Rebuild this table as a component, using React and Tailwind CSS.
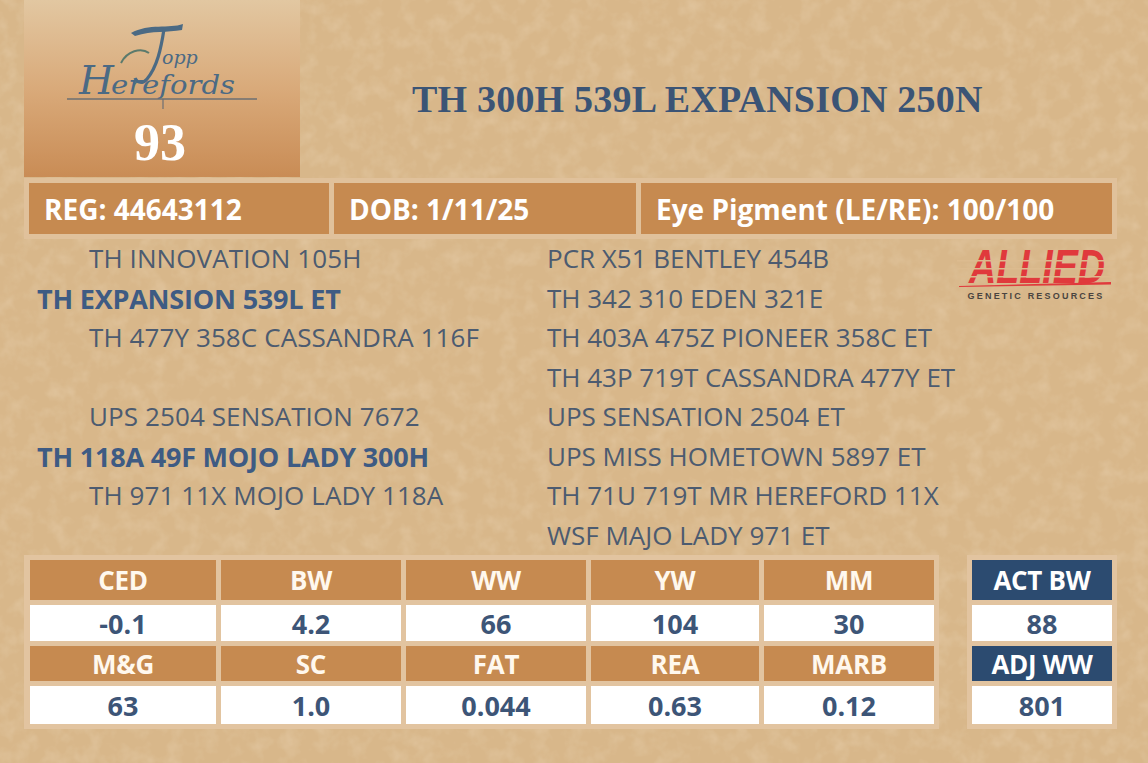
import React from 'react'

const SANS = { fontFamily: '"Open Sans", "Liberation Sans", sans-serif' }

const leftPedigree = [
  { text: 'TH INNOVATION 105H', indent: true },
  { text: 'TH EXPANSION 539L ET', bold: true },
  { text: 'TH 477Y 358C CASSANDRA 116F', indent: true },
  { text: '' },
  { text: 'UPS 2504 SENSATION 7672', indent: true },
  { text: 'TH 118A 49F MOJO LADY 300H', bold: true },
  { text: 'TH 971 11X MOJO LADY 118A', indent: true },
  { text: '' },
]

const rightPedigree = [
  'PCR X51 BENTLEY 454B',
  'TH 342 310 EDEN 321E',
  'TH 403A 475Z PIONEER 358C ET',
  'TH 43P 719T CASSANDRA 477Y ET',
  'UPS SENSATION 2504 ET',
  'UPS MISS HOMETOWN 5897 ET',
  'TH 71U 719T MR HEREFORD 11X',
  'WSF MAJO LADY 971 ET',
]

const epdTop = [
  ['CED', '-0.1'],
  ['BW', '4.2'],
  ['WW', '66'],
  ['YW', '104'],
  ['MM', '30'],
]

const epdBottom = [
  ['M&G', '63'],
  ['SC', '1.0'],
  ['FAT', '0.044'],
  ['REA', '0.63'],
  ['MARB', '0.12'],
]

function ToppLogo() {
  return (
    <svg width="196" height="92" viewBox="0 0 196 92">
      <g fill="#4b6a84" fontFamily="'DejaVu Serif', serif" fontStyle="italic">
        <path d="M66 12 C 84 2, 104 8, 118 3 L 117 9 C 102 12, 88 9, 70 15 Z" />
        <path d="M99 8 C 96 28, 92 46, 82 58 C 78 63, 72 62, 70 57" stroke="#4b6a84" strokeWidth="3.2" fill="none" />
        <path d="M56 42 C 62 30, 76 26, 84 32" stroke="#5b7a6c" strokeWidth="2" fill="none" />
        <text x="97" y="43" fontSize="19">opp</text>
        <text x="14" y="73" fontSize="40">H</text>
        <text x="46" y="73" fontSize="26" textLength="124" lengthAdjust="spacingAndGlyphs">erefords</text>
      </g>
      <line x1="2" y1="78" x2="192" y2="78" stroke="#6d6f73" strokeWidth="1.5" />
      <line x1="98" y1="78" x2="98" y2="88" stroke="#6d6f73" strokeWidth="1.2" />
    </svg>
  )
}

function AlliedLogo() {
  return (
    <div className="w-[158px] flex flex-col items-center">
      <svg width="158" height="42" viewBox="0 0 158 42" className="overflow-visible">
        <text
          x="80"
          y="36"
          textAnchor="middle"
          fill="#e0393c"
          fontSize="48"
          fontWeight="900"
          fontStyle="italic"
          fontFamily="'Liberation Sans', sans-serif"
          textLength="136"
          lengthAdjust="spacingAndGlyphs"
        >
          ALLIED
        </text>
        <rect x="0" y="13" width="158" height="1.5" fill="#dcbb8f" />
        <rect x="0" y="21" width="158" height="1.5" fill="#dcbb8f" />
        <rect x="0" y="29" width="158" height="1.5" fill="#dcbb8f" />
        <path d="M2 39 L 154 35 L 154 37.5 L 2 40 Z" fill="#e0393c" />
      </svg>
      <span
        className="mt-[3px] text-[9px] font-black tracking-[2.2px] text-[#4a4440] leading-none whitespace-nowrap"
        style={{ fontFamily: '"Liberation Sans", sans-serif' }}
      >
        GENETIC RESOURCES
      </span>
    </div>
  )
}

function EpdCell({ children, head, navy }) {
  return (
    <div
      className={`flex items-center justify-center font-bold leading-none ${
        head
          ? navy
            ? 'bg-[#2c4b70] text-white text-[26px] tracking-[-0.3px]'
            : 'bg-[#c68a50] text-[#fff8ee] text-[26px] tracking-[-0.3px]'
          : 'bg-white text-[#3d5577] text-[27px]'
      }`}
    >
      {children}
    </div>
  )
}

export default function App() {
  return (
    <div className="relative w-[1148px] h-[763px] overflow-hidden bg-[#d8b78a]" style={SANS}>
      {/* paper texture */}
      <svg className="absolute inset-0 pointer-events-none" width="1148" height="763">
        <filter id="paper">
          <feTurbulence type="fractalNoise" baseFrequency="0.06" numOctaves="3" seed="7" />
          <feColorMatrix
            type="matrix"
            values="0 0 0 0 0.97  0 0 0 0 0.87  0 0 0 0 0.72  0 0 0 1 -0.42"
          />
        </filter>
        <rect width="1148" height="763" filter="url(#paper)" opacity="0.4" />
      </svg>

      <div className="relative">
        {/* header */}
        <div className="flex h-[178px]">
          <div className="ml-[24px] w-[276px] h-[177px] bg-gradient-to-b from-[#e2c7a1] via-[#d9aa7a] to-[#c98c55] flex flex-col items-center">
            <div className="mt-[21px] ml-[2px]">
              <ToppLogo />
            </div>
            <div
              className="mt-[4px] mr-[4px] text-[52px] font-bold leading-none text-white"
              style={{ fontFamily: '"Liberation Serif", serif' }}
            >
              93
            </div>
          </div>
          <div
            className="ml-[112px] mt-[80px] text-[38px] font-bold leading-none text-[#3b5475] tracking-[0.2px]"
            style={{ fontFamily: '"Liberation Serif", serif' }}
          >
            TH 300H 539L EXPANSION 250N
          </div>
        </div>

        {/* registration bar */}
        <div className="ml-[24px] w-[1093px] h-[61px] p-[5px] flex gap-[5px] bg-[#e0c19b] text-[28px] font-bold text-white">
          <div className="w-[300px] bg-[#c68a50] flex items-center pl-[15px]">
            REG: 44643112
          </div>
          <div className="w-[302px] bg-[#c68a50] flex items-center pl-[15px]">
            DOB: 1/11/25
          </div>
          <div className="flex-1 bg-[#c68a50] flex items-center pl-[15px]">
            Eye Pigment (LE/RE): 100/100
          </div>
        </div>

        {/* pedigree */}
        <div className="flex h-[316px]">
          <div className="w-[547px] pl-[37px]">
            {leftPedigree.map((row, i) => (
              <div
                key={i}
                className={`h-[39.5px] leading-[39.5px] whitespace-nowrap ${
                  row.bold
                    ? 'text-[27px] font-bold tracking-[-0.2px] text-[#3e5b83]'
                    : 'pl-[52px] text-[26px] tracking-[0.1px] text-[#4c5b70]'
                }`}
              >
                {row.text}
              </div>
            ))}
          </div>
          <div className="flex-1 pr-[33px] text-[26px] text-[#4c5b70]">
            <div className="float-right mt-[8px]">
              <AlliedLogo />
            </div>
            {rightPedigree.map((t, i) => (
              <div key={i} className="h-[39.5px] leading-[39.5px] whitespace-nowrap">
                {t}
              </div>
            ))}
          </div>
        </div>

        {/* EPD tables */}
        <div className="flex">
          <div className="ml-[24px] pl-[6px] pr-[5px] py-[5px] bg-[#e2c4a0] grid grid-cols-[186px_180px_180px_168px_170px] grid-rows-[40px_36px_35px_38px] gap-x-[5px] gap-y-[5px]">
            {epdTop.map(([h]) => (
              <EpdCell key={h} head>{h}</EpdCell>
            ))}
            {epdTop.map(([h, v]) => (
              <EpdCell key={h + 'v'}>{v}</EpdCell>
            ))}
            {epdBottom.map(([h]) => (
              <EpdCell key={h} head>{h}</EpdCell>
            ))}
            {epdBottom.map(([h, v]) => (
              <EpdCell key={h + 'v'}>{v}</EpdCell>
            ))}
          </div>
          <div className="ml-[28px] p-[5px] bg-[#e2c4a0] grid grid-cols-[140px] grid-rows-[40px_36px_35px_38px] gap-y-[5px]">
            <EpdCell head navy>ACT BW</EpdCell>
            <EpdCell>88</EpdCell>
            <EpdCell head navy>ADJ WW</EpdCell>
            <EpdCell>801</EpdCell>
          </div>
        </div>
      </div>
    </div>
  )
}
